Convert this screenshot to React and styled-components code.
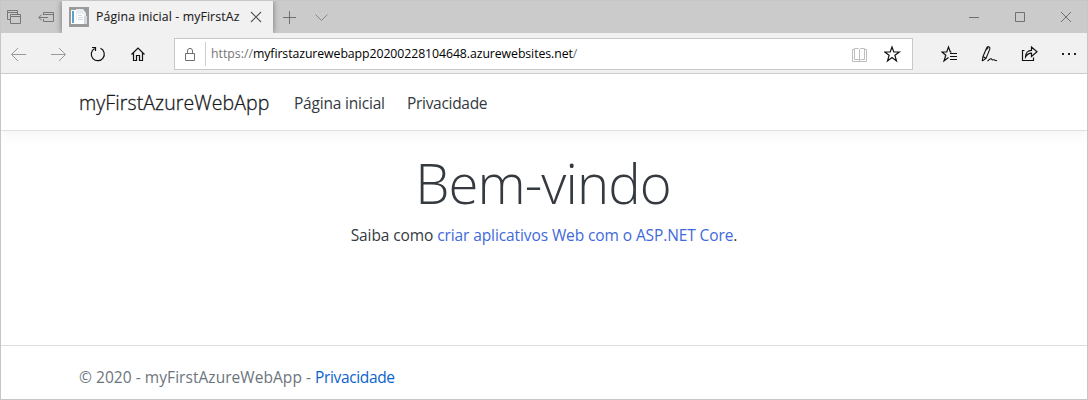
import React from "react";
import styled, { createGlobalStyle } from "styled-components";

const Global = createGlobalStyle`
  * { box-sizing: border-box; }
  body { margin: 0; background: #fff; font-family: "Open Sans", "Noto Sans", sans-serif; }
`;

const Window = styled.div`
  width: 1088px;
  height: 400px;
  border: 1px solid #c6c6c6;
  display: flex;
  flex-direction: column;
  overflow: hidden;
  background: #fff;
`;

const TitleBar = styled.div`
  height: 32px;
  flex: none;
  display: flex;
  background: #cbcbcb;
`;

const TabTools = styled.div`
  width: 61px;
  display: flex;
  align-items: center;
  gap: 14px;
  padding-left: 5px;
`;

const Tab = styled.div`
  width: 211px;
  display: flex;
  align-items: center;
  padding-left: 7px;
  background: #f1f1f1;
  box-shadow: 0 0 6px rgba(0, 0, 0, 0.45);
  clip-path: inset(0 -8px 0 -8px);
`;

const TabTitle = styled.span`
  width: 148px;
  margin: 0 6px 0 7px;
  font-size: 12.3px;
  line-height: 20px;
  letter-spacing: 0.12px;
  white-space: nowrap;
  color: #1c1c1c;
  -webkit-text-stroke: 0.1px #1c1c1c;
`;

const NewTabTools = styled.div`
  display: flex;
  align-items: center;
  gap: 16px;
  padding-left: 9px;
`;

const WindowControls = styled.div`
  margin-left: auto;
  display: flex;
  align-items: center;
  gap: 34px;
  padding-right: 15px;
`;

const Toolbar = styled.div`
  height: 41px;
  flex: none;
  display: flex;
  align-items: center;
  background: #f1f1f1;
  border-top: 1px solid #f1f1f1;
  border-bottom: 1px solid #cfcfcf;
  padding: 0 8px 0 9px;
`;

const ButtonGroup = styled.div`
  display: flex;
  gap: ${(p) => p.$gap || "22px"};
`;

const AddressBar = styled.div`
  width: 739px;
  height: 32px;
  margin: 0 28px 0 26px;
  padding: 0 10px 0 9px;
  display: flex;
  align-items: center;
  background: #fff;
  border: 1px solid #c9c9c9;
`;

const Divider = styled.span`
  width: 1px;
  height: 24px;
  margin: 0 5px 0 8px;
  background: #cfcfcf;
`;

const Url = styled.span`
  flex: 1;
  font-size: 12.3px;
  line-height: 20px;
  white-space: nowrap;
  color: #767676;
`;

const Host = styled.span`
  color: #000;
  letter-spacing: -0.08px;
`;

const Glyph = styled.svg`
  display: block;
  flex: none;
  fill: none;
  stroke: ${(p) => p.$color || "#111"};
  stroke-width: ${(p) => p.$weight || 1};
`;

const SiteHeader = styled.header`
  height: 57px;
  flex: none;
  display: flex;
  align-items: center;
  padding: 2px 0 0 78px;
  border-bottom: 1px solid #dee2e6;
  box-shadow: 0 4px 12px rgba(0, 0, 0, 0.05);
`;

const Brand = styled.span`
  width: 215px;
  font-size: 19.5px;
  font-weight: 300;
  letter-spacing: 0.1px;
  color: #16181b;
  -webkit-text-stroke: 0.3px #16181b;
  line-height: 30px;
`;

const NavItem = styled.span`
  width: 113px;
  font-size: 15.5px;
  letter-spacing: ${(p) => p.$spacing};
  color: #343a40;
  line-height: 24px;
`;

const Main = styled.main`
  flex: 1;
  display: flex;
  flex-direction: column;
  align-items: center;
  padding-top: 19px;
`;

const Title = styled.h1`
  margin: 0 0 0 -2px;
  font-size: 54.5px;
  font-weight: 300;
  line-height: 67px;
  letter-spacing: -0.9px;
  color: #343a40;
`;

const Lead = styled.p`
  margin: 6px 0 0;
  font-size: 15.5px;
  line-height: 24px;
  letter-spacing: -0.1px;
  color: #343a40;
  white-space: nowrap;
`;

const Link = styled.span`
  color: ${(p) => p.$color};
  letter-spacing: ${(p) => p.$spacing || "inherit"};
`;

const Footer = styled.footer`
  height: 54px;
  flex: none;
  border-top: 1px solid #dedede;
  padding: 19px 0 0 78px;
  font-size: 15.5px;
  line-height: 24px;
  letter-spacing: 0.05px;
  color: #6c757d;
  white-space: nowrap;
`;

const Icon = ({ w = 18, h = 18, children, ...rest }) => (
  <Glyph width={w} height={h} viewBox={`0 0 ${w} ${h}`} {...rest}>
    {children}
  </Glyph>
);

const Favicon = () => (
  <svg width="20" height="20" viewBox="0 0 20 20">
    <path fill="#9b9b9b" d="M0 0h20v20H0z" />
    <path fill="#fff" d="M2 3h10v14H2z" />
    <path fill="#5ba3cf" d="M3 4h2v12H3z" />
    <path fill="#e8edf3" d="M7 2h7l3 4v7H7z" />
    <path fill="#fff" d="M8 7h7v10H8z" />
    <path fill="#d3dae3" d="M9 8h4v1H9zM9 10h5v1H9zM9 12h5v1H9zM15 9h3v8h-3z" />
  </svg>
);

export default function App() {
  return (
    <>
      <Global />
      <Window>
        <TitleBar>
          <TabTools>
            <Icon $color="#777">
              <path d="M4.500 11.500H1.500V2.500H11.500V6.500M1.500 4.500H11.500M4.500 6.500H14.500V15.500H4.500ZM4.500 8.500H14.500" />
            </Icon>
            <Icon $color="#777">
              <path d="M5.500 7V4.500H15.500V13.500H5.500V11M5.500 6.500H15.500M.8 9.500H10M3.500 6.800L.8 9.500L3.500 12.200" />
            </Icon>
          </TabTools>
          <Tab>
            <Favicon />
            <TabTitle>Página inicial - myFirstAz</TabTitle>
            <Icon w={12} h={12} $color="#555" $weight={1.1}>
              <path d="M1 1L11 11M11 1L1 11" />
            </Icon>
          </Tab>
          <NewTabTools>
            <Icon w={16} h={16} $color="#707070">
              <path d="M1 8.500H14M7.500 2V15" />
            </Icon>
            <Icon w={16} h={16} $color="#858585">
              <path d="M1.500 5.500L7.500 11.500L13.500 5.500" />
            </Icon>
          </NewTabTools>
          <WindowControls>
            <Icon w={12} h={12} $color="#707070">
              <path d="M1 6.500H11" />
            </Icon>
            <Icon w={12} h={12} $color="#707070">
              <path d="M1.500 1.500H10.500V10.500H1.500Z" />
            </Icon>
            <Icon w={12} h={12} $color="#707070">
              <path d="M1 1L11 11M11 1L1 11" />
            </Icon>
          </WindowControls>
        </TitleBar>
        <Toolbar>
          <ButtonGroup>
            <Icon $color="#9a9a9a">
              <path d="M16 9.500H1.800M8 3L1.500 9.500L8 16" />
            </Icon>
            <Icon $color="#9a9a9a">
              <path d="M1 9.500H15.200M9 3L15.500 9.500L9 16" />
            </Icon>
            <Icon $weight={1.2}>
              <path d="M10.500 3.300A6.500 6.500 0 1 1 4.500 3.600M2 2.500H5.500V6" />
            </Icon>
            <Icon $weight={1.2}>
              <path d="M1.500 9.500L8 3L14.500 9.500M3.500 8V15.500H6.500V10.500H9.500V15.500H12.500V8" />
            </Icon>
          </ButtonGroup>
          <AddressBar>
            <Icon w={13} $color="#707070">
              <path d="M1.500 8.500H10.500V15.500H1.500ZM3.500 8.500V6A2.500 2.700 0 0 1 8.500 6V8.500" />
            </Icon>
            <Divider />
            <Url>
              https://<Host>myfirstazurewebapp20200228104648.azurewebsites.net</Host>/
            </Url>
            <ButtonGroup $gap="16px">
              <Icon w={16} $color="#bdbdbd">
                <path d="M2.500 4.500H.5V16.500H14.500V4.500H12.500M2.500 3.500H6.500L7.500 4.500L8.500 3.500H12.500V14.500H8.500L7.500 15.500L6.500 14.500H2.500ZM7.500 4.500V16" />
              </Icon>
              <Icon $weight={1.2}>
                <path d="M8 2L9.800 7H15.300L10.900 10.300L12.500 16L8 12.600L3.500 16L5.100 10.300L.7 7H6.200Z" />
              </Icon>
            </ButtonGroup>
          </AddressBar>
          <ButtonGroup>
            <Icon $weight={1.2}>
              <path d="M10.500 7H9.300L7.500 2L5.700 7H1L4.800 10.300L3 16L7.500 12.600M9 8.500H16M9 11.500H16M9 14.500H16" />
            </Icon>
            <Icon $weight={1.1}>
              <path d="M1.200 16L2 11.500L5.500 3.200C6.500 .6 9.500 1.500 8.800 4.200L5 13.500L1.200 16M2 11.500L5 13.500M4.800 5L7.300 2.500M6.500 16C8 15.500 9 13 10.200 13.800C11.500 16.500 13 13.500 14 15.300L16 15.700" />
            </Icon>
            <Icon $weight={1.2}>
              <path d="M3.500 5.500H1.500V15.500H12.500V12.500M4.500 12C4.500 8 7 5.300 10.500 5.300V2L16 6.700L10.500 11.400V8.200C8 8.200 6 9.500 4.500 12Z" />
            </Icon>
            <Icon $color="none">
              <path fill="#222" d="M1 8h2v2H1zM7 8h2v2H7zM13 8h2v2h-2z" />
            </Icon>
          </ButtonGroup>
        </Toolbar>
        <SiteHeader>
          <Brand>myFirstAzureWebApp</Brand>
          <NavItem $spacing="-0.2px">Página inicial</NavItem>
          <NavItem $spacing="-0.3px">Privacidade</NavItem>
        </SiteHeader>
        <Main>
          <Title>Bem-vindo</Title>
          <Lead>
            Saiba como <Link $color="#4169dc">criar aplicativos Web com o ASP.NET Core</Link>.
          </Lead>
        </Main>
        <Footer>
          © 2020 - myFirstAzureWebApp -{" "}
          <Link $color="#0b63ce" $spacing="-0.36px">
            Privacidade
          </Link>
        </Footer>
      </Window>
    </>
  );
}
